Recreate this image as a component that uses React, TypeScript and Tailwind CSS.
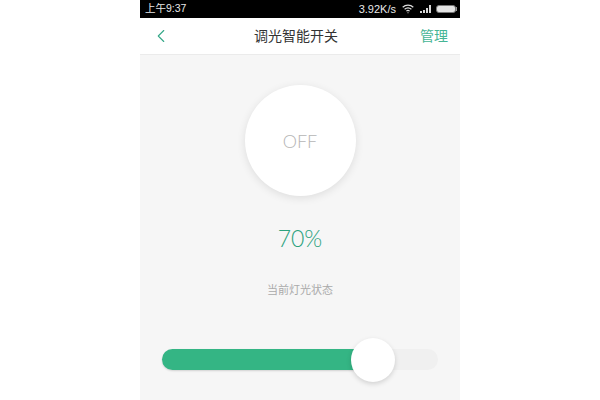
import { ChevronLeft } from 'lucide-react'

const cjk = 'font-["Noto_Sans","Noto_Sans_CJK_SC",sans-serif]'

function StatusBar() {
  return (
    <div className='flex h-[18px] items-center justify-between bg-black pl-[5px] pr-[3px] font-["Liberation_Sans","Noto_Sans_CJK_SC",sans-serif] text-[10.5px] text-[#e8e8e8]'>
      <span>上午9:37</span>
      <div className="flex items-center">
        <span className="text-[11px]">3.92K/s</span>
        {/* wifi */}
        <svg width="12" height="10" viewBox="0 0 12 10" className="ml-[6px]" fill="none" stroke="#e0e0e0">
          <path d="M.7 3.2C3.7.4 8.3.4 11.3 3.2" strokeWidth="1.2" />
          <path d="M2.6 5.2C4.6 3.5 7.4 3.5 9.4 5.2" strokeWidth="1.2" />
          <path d="M4.4 7.1C5.4 6.3 6.6 6.3 7.6 7.1" strokeWidth="1.2" />
          <path d="M5 8.5L6 9.6L7 8.5Z" fill="#e0e0e0" stroke="none" />
        </svg>
        {/* signal */}
        <div className="ml-[6px] flex h-[8px] items-end gap-px">
          <span className="h-[2px] w-[2px] bg-[#d8d8d8]" />
          <span className="h-[3px] w-[2px] bg-[#d8d8d8]" />
          <span className="h-[5px] w-[2px] bg-[#d8d8d8]" />
          <span className="h-[8px] w-[2px] bg-[#d8d8d8]" />
        </div>
        {/* battery */}
        <div className="ml-[5px] flex items-center">
          <div className="h-[8px] w-[20px] rounded-[3px] border border-[#777] bg-[#e4e4e4]" />
          <span className="h-[4px] w-px bg-[#999]" />
        </div>
      </div>
    </div>
  )
}

function NavBar() {
  return (
    <div className={`flex h-[37px] items-center justify-between border-b border-[#ebebeb] bg-white pl-[10px] pr-[12px] ${cjk}`}>
      <ChevronLeft className="h-[22px] w-[22px] text-[#35a888]" strokeWidth={1.2} />
      <span className="text-sm text-[#333]">调光智能开关</span>
      <span className="text-sm text-[#45b595]">管理</span>
    </div>
  )
}

export default function App() {
  return (
    <div className="flex h-[400px] w-[600px] justify-center overflow-hidden bg-white">
      <div className="flex w-[320px] flex-col bg-[#f6f6f6]">
        <StatusBar />
        <NavBar />
        <div className="flex flex-col items-center pt-[30px]">
          <div className='flex h-[111px] w-[111px] items-center justify-center rounded-full bg-white font-["Lato",sans-serif] text-lg font-light text-[#b5b5b5] shadow-[0_2px_8px_rgba(0,0,0,0.1)]'>
            OFF
          </div>
          <div className='mt-[27px] font-["Lato",sans-serif] text-[23px] leading-[30px] font-light text-[#2ba27e]'>
            70%
          </div>
          <div className={`mt-[29px] text-[11px] leading-[16px] text-[#aaa] ${cjk}`}>
            当前灯光状态
          </div>
          {/* slider */}
          <div className="relative mt-[51px] h-[21px] w-[276px] rounded-full bg-[#f0f0f0]">
            <div className="h-full w-[210px] rounded-full bg-[#34b584] shadow-[0_1px_2px_rgba(0,0,0,0.15)]" />
            <div className="absolute top-[-11px] left-[189px] h-[44px] w-[44px] rounded-full bg-white shadow-[0_2px_5px_rgba(0,0,0,0.15)]" />
          </div>
        </div>
      </div>
    </div>
  )
}
